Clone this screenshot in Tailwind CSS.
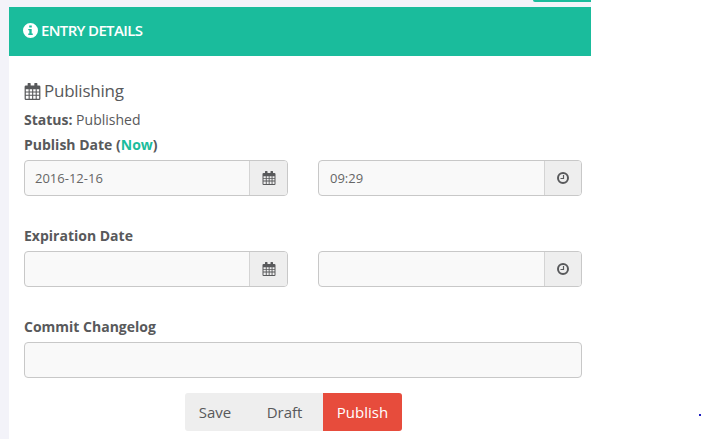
<!DOCTYPE html>
<html lang="en">
<head>
  <meta charset="UTF-8" />
  <title>Entry Details</title>
  <script src="https://cdn.jsdelivr.net/npm/@tailwindcss/browser@4"></script>
</head>
<body class="h-[439px] overflow-hidden bg-white font-['Open_Sans',sans-serif] text-[14px] text-[#58595b]">
  <svg class="hidden">
    <symbol id="cal" viewBox="0 0 13 14">
      <path fill="currentColor" fill-rule="evenodd" d="M3 0h1.500a.5.5 0 0 1 .5.5V2h3V.5a.5.5 0 0 1 .5-.5H10a.5.5 0 0 1 .5.5V2h1.400A1.100 1.100 0 0 1 13 3.100v9.800A1.100 1.100 0 0 1 11.900 14H1.100A1.100 1.100 0 0 1 0 12.900V3.100A1.100 1.100 0 0 1 1.100 2h1.400V.5A.5.500 0 0 1 3 0ZM1 5.200v1.800h2.300V5.200Zm3.200 0v1.800h2.000V5.200Zm2.900 0v1.800h2.000V5.200Zm2.900 0v1.800h2.000V5.200ZM1 7.800v1.800h2.300V7.800Zm3.200 0v1.800h2.000V7.800Zm2.900 0v1.800h2.000V7.800Zm2.900 0v1.800h2.000V7.800ZM1 10.400V13h2.300v-2.600Zm3.200 0V13h2.000v-2.600Zm2.900 0V13h2.000v-2.600Zm2.900 0V13h2.000v-2.600Z"/>
    </symbol>
    <symbol id="clock" viewBox="0 0 12 12">
      <circle cx="6" cy="6" r="5" fill="none" stroke="currentColor" stroke-width="2"/>
      <path d="M6.500 3v3.500H3.500" fill="none" stroke="currentColor" stroke-width="1.200"/>
    </symbol>
  </svg>

  <div class="flex h-full">
    <div class="w-[591px] shrink-0 bg-[#f3f3f9] pl-[9px]">
      <div class="flex h-[7px] justify-end">
        <div class="h-[2px] w-[58px] rounded-bl-[2px] bg-[#1abc9c]"></div>
      </div>

      <div class="flex h-[49px] items-center gap-[3px] bg-[#1abc9c] pb-[2px] pl-[14px] text-[15px] font-semibold text-white">
        <svg class="size-[15px]" viewBox="0 0 14 14">
          <path fill="currentColor" fill-rule="evenodd" d="M7 0a7 7 0 1 1 0 14A7 7 0 0 1 7 0ZM5.800 2.300v2h2.400v-2ZM4.900 5.500v1.300h1v3H4.900v1.500h4.200V9.800h-1V5.500Z"/>
        </svg>
        <span class="tracking-[-0.65px]">ENTRY DETAILS</span>
      </div>

      <div class="h-[383px] bg-white pl-[15px] pr-[9px] pt-[24px]">
        <h2 class="flex h-[22px] items-center gap-[3px] text-[17px] font-medium leading-[22px] tracking-[-0.25px]">
          <svg class="size-[17px]"><use href="#cal"/></svg>
          Publishing
        </h2>
        <p class="mt-[8px] h-[20px] leading-[20px]"><b class="font-bold">Status:</b> Published</p>
        <label class="mt-[5px] block h-[20px] font-bold leading-[20px]">Publish Date (<span class="text-[#1abc9c]">Now</span>)</label>

        <div class="mt-[5px] flex gap-[30px]">
          <div class="flex h-[36px] w-[264px] overflow-hidden rounded-[4px] border border-[#c8c8c8] bg-[#f9f9f9]">
            <input class="mt-[1px] min-w-0 flex-1 bg-transparent px-[10px] text-[13px] text-[#666666] outline-none" value="2016-12-16" />
            <span class="flex w-[38px] items-center justify-center border-l border-[#d4d4d4] bg-[#eeeeee]"><svg class="size-[14px]"><use href="#cal"/></svg></span>
          </div>
          <div class="flex h-[36px] w-[264px] overflow-hidden rounded-[4px] border border-[#c8c8c8] bg-[#f9f9f9]">
            <input class="mt-[1px] min-w-0 flex-1 bg-transparent px-[11px] text-[13px] text-[#666666] outline-none" value="09:29" />
            <span class="flex w-[37px] items-center justify-center border-l border-[#d4d4d4] bg-[#eeeeee]"><svg class="size-[12px]"><use href="#clock"/></svg></span>
          </div>
        </div>

        <label class="mt-[30px] block h-[20px] font-bold leading-[20px]">Expiration Date</label>
        <div class="mt-[5px] flex gap-[30px]">
          <div class="flex h-[36px] w-[264px] overflow-hidden rounded-[4px] border border-[#c8c8c8] bg-[#f9f9f9]">
            <input class="min-w-0 flex-1 bg-transparent px-[10px] text-[13px] outline-none" />
            <span class="flex w-[38px] items-center justify-center border-l border-[#d4d4d4] bg-[#eeeeee]"><svg class="size-[14px]"><use href="#cal"/></svg></span>
          </div>
          <div class="flex h-[36px] w-[264px] overflow-hidden rounded-[4px] border border-[#c8c8c8] bg-[#f9f9f9]">
            <input class="min-w-0 flex-1 bg-transparent px-[10px] text-[13px] outline-none" />
            <span class="flex w-[37px] items-center justify-center border-l border-[#d4d4d4] bg-[#eeeeee]"><svg class="size-[12px]"><use href="#clock"/></svg></span>
          </div>
        </div>

        <label class="mt-[30px] block h-[20px] font-bold leading-[20px]">Commit Changelog</label>
        <input class="mt-[5px] block h-[36px] w-[558px] rounded-[4px] border border-[#c8c8c8] bg-[#f9f9f9] outline-none" />

        <div class="ml-[161px] mt-[15px] flex h-[38px] w-[217px] overflow-hidden rounded-[3px] bg-[#eeeeee] text-[15px]">
          <button class="w-[60px]">Save</button>
          <button class="ml-[8px] w-[63px]">Draft</button>
          <button class="ml-[7px] w-[79px] bg-[#e74c3c] text-white">Publish</button>
        </div>
      </div>
    </div>

    <div class="relative flex-1">
      <span class="absolute left-[108px] top-[414px] size-[2px] bg-[#2020c0]"></span>
    </div>
  </div>
</body>
</html>
